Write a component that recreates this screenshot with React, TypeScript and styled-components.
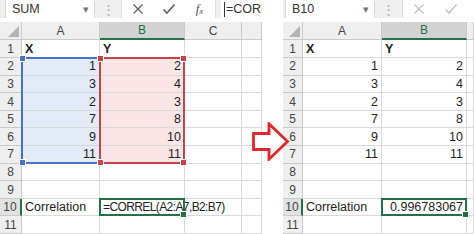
import React from "react";
import styled, { createGlobalStyle } from "styled-components";

const GlobalStyle = createGlobalStyle`
  html, body {
    margin: 0;
    padding: 0;
    background: #ffffff;
    overflow: hidden;
  }
  body {
    font-family: "Liberation Sans", Arial, sans-serif;
  }
`;

const GREEN = "#217346";
const BLUE = "#4472c4";
const RED = "#c8424a";

const ROW_H = 17.6;

const xs = [1, 3, 2, 7, 9, 11];
const ys = [2, 4, 3, 8, 10, 11];

function Sheet({
  width,
  name,
  toolbarPad,
  dotsWidth,
  fxWidth,
  columns,
  letters,
  disabled,
  result,
  editing,
}: {
  width: number;
  name: string;
  toolbarPad: number;
  dotsWidth: number;
  fxWidth: number;
  columns: string;
  letters: string[];
  disabled?: boolean;
  result: string;
  editing?: boolean;
}) {
  const rows: (string | number)[][] = [
    ["X", "Y"],
    ...xs.map((x, i) => [x, ys[i]]),
    ["", ""],
    ["", ""],
    ["Correlation", result],
    ["", ""],
  ];

  return (
    <Panel $w={width}>
      <Toolbar $pad={toolbarPad}>
        <NameBox>
          <span>{name}</span>
          <Caret>▾</Caret>
        </NameBox>
        <Dots $w={dotsWidth}>⋮</Dots>
        <FxBox $w={fxWidth}>
          <FxButton $disabled={disabled}>
            <svg width="12" height="12" viewBox="0 0 12 12">
              <path d="M1.5 1.5 L10.5 10.5 M10.5 1.5 L1.5 10.5" stroke="currentColor" strokeWidth="1.3" fill="none" />
            </svg>
          </FxButton>
          <FxButton $disabled={disabled}>
            <svg width="14" height="12" viewBox="0 0 14 12">
              <path d="M1.5 6.5 L5 10 L12.5 1.5" stroke="currentColor" strokeWidth="1.6" fill="none" />
            </svg>
          </FxButton>
          {!disabled && (
            <FxButton>
              <FxText>
                f<sub>x</sub>
              </FxText>
            </FxButton>
          )}
        </FxBox>
        {editing && (
          <FormulaInput>
            <Cursor />
            =CORREL(A2:A7,B2:B7)
          </FormulaInput>
        )}
      </Toolbar>

      <Grid $cols={columns}>
        <Corner $r={1} $c={1}>
          <svg width="11" height="11" viewBox="0 0 11 11">
            <polygon points="11,0 11,11 0,11" fill="#b4b4b4" />
          </svg>
        </Corner>
        {letters.map((l, i) => (
          <ColHeader key={i} $r={1} $c={i + 2} $active={l === "B"}>
            {l}
          </ColHeader>
        ))}

        {rows.map((row, ri) => (
          <React.Fragment key={ri}>
            <RowHeader $r={ri + 2} $c={1} $active={ri === 9}>
              {ri + 1}
            </RowHeader>
            {letters.map((_, ci) => {
              const v = ci < 2 ? row[ci] : "";
              const numeric = typeof v === "number" || /^[0-9.]+$/.test(String(v));
              const inRange = editing && ri >= 1 && ri <= 6;
              return (
                <Cell
                  key={ci}
                  $r={ri + 2}
                  $c={ci + 2}
                  $right={numeric}
                  $bold={ri === 0}
                  $fill={inRange && ci === 0 ? "#e3ebf7" : inRange && ci === 1 ? "#fbe6e6" : undefined}
                  $tight={editing && ri === 9 && ci === 1}
                >
                  {v}
                </Cell>
              );
            })}
          </React.Fragment>
        ))}

        {editing && (
          <>
            <RangeBox $c={2} $r0={3} $r1={9} $color={BLUE} $noRight>
              <Handle $color={BLUE} $x="left" $y="top" />
              <Handle $color={BLUE} $x="left" $y="bottom" />
            </RangeBox>
            <RangeBox $c={3} $r0={3} $r1={9} $color={RED}>
              <Handle $color={RED} $x="left" $y="top" />
              <Handle $color={RED} $x="right" $y="top" />
              <Handle $color={RED} $x="left" $y="bottom" />
              <Handle $color={RED} $x="right" $y="bottom" />
            </RangeBox>
          </>
        )}
        <RangeBox $c={3} $r0={11} $r1={12} $color={GREEN}>
          <Handle $color={GREEN} $x="right" $y="bottom" />
        </RangeBox>
      </Grid>
    </Panel>
  );
}

export default function App() {
  return (
    <>
      <GlobalStyle />
      <Page>
        <Sheet
          width={262}
          name="SUM"
          toolbarPad={5}
          dotsWidth={26}
          fxWidth={95}
          columns="22px 78px 85px 57px 20px"
          letters={["A", "B", "C", ""]}
          result="=CORREL(A2:A7,B2:B7)"
          editing
        />
        <Sheet
          width={191}
          name="B10"
          toolbarPad={2}
          dotsWidth={27}
          fxWidth={100}
          columns="20px 79px 85px 7px"
          letters={["A", "B", ""]}
          result="0.996783067"
          disabled
        />
        <Arrow width="38" height="39" viewBox="0 0 38 39">
          <polygon
            points="1.5,11.5 17,11.5 17,1.8 35.5,19.5 17,37.2 17,27.5 1.5,27.5"
            fill="#ffffff"
            stroke="#e2262b"
            strokeWidth="2.8"
            strokeLinejoin="miter"
          />
        </Arrow>
      </Page>
    </>
  );
}

const Page = styled.div`
  position: relative;
  display: flex;
  gap: 21px;
  width: 474px;
  height: 234px;
  overflow: hidden;
`;

const Panel = styled.div<{ $w: number }>`
  display: flex;
  flex-direction: column;
  flex: 0 0 ${(p) => p.$w}px;
  width: ${(p) => p.$w}px;
  overflow: hidden;
`;

const Toolbar = styled.div<{ $pad: number }>`
  display: flex;
  align-items: center;
  height: 33px;
  padding-left: ${(p) => p.$pad}px;
  background: #f0f0f0;
  box-sizing: border-box;
  overflow: hidden;
`;

const NameBox = styled.div`
  display: flex;
  flex: 0 0 auto;
  align-items: center;
  justify-content: space-between;
  width: 90px;
  height: 22px;
  padding: 0 5px 0 6px;
  box-sizing: border-box;
  background: #ffffff;
  border: 1px solid #d8d8d8;
  font-size: 12.5px;
  color: #333333;
`;

const Caret = styled.span`
  font-size: 11px;
  color: #777777;
`;

const Dots = styled.div<{ $w: number }>`
  flex: 0 0 auto;
  width: ${(p) => p.$w}px;
  text-align: center;
  font-size: 13px;
  color: #b0b0b0;
`;

const FxBox = styled.div<{ $w: number }>`
  display: flex;
  align-items: center;
  flex: 0 0 auto;
  width: ${(p) => p.$w}px;
  height: 22px;
  background: #ffffff;
  border: 1px solid #e0e0e0;
  box-sizing: border-box;
`;

const FxButton = styled.div<{ $disabled?: boolean }>`
  display: flex;
  align-items: center;
  justify-content: center;
  width: 32px;
  height: 100%;
  color: ${(p) => (p.$disabled ? "#c4c4c4" : "#5e5e5e")};
`;

const FxText = styled.span`
  font-family: "Liberation Serif", "Times New Roman", serif;
  font-style: italic;
  font-size: 13px;
  color: #555555;

  sub {
    font-size: 9px;
    vertical-align: -1px;
  }
`;

const FormulaInput = styled.div`
  display: flex;
  align-items: center;
  flex: 1 1 auto;
  min-width: 0;
  overflow: hidden;
  margin-left: 5px;
  height: 22px;
  padding-left: 3px;
  background: #ffffff;
  font-size: 12.5px;
  color: #333333;
  white-space: nowrap;
`;

const Cursor = styled.span`
  display: inline-block;
  flex: 0 0 auto;
  width: 1px;
  height: 15px;
  margin-right: 1px;
  background: #333333;
`;

const Grid = styled.div<{ $cols: string }>`
  display: grid;
  grid-template-columns: ${(p) => p.$cols};
  grid-template-rows: 18px repeat(11, ${ROW_H}px);
  margin-top: 4px;
  background: #ffffff;
`;

type Pos = { $r: number; $c: number };

const Corner = styled.div<Pos>`
  grid-row: ${(p) => p.$r};
  grid-column: ${(p) => p.$c};
  display: flex;
  align-items: flex-end;
  justify-content: flex-end;
  padding: 0 2px 2px 0;
  background: #efefef;
  border-right: 1px solid #cacaca;
  border-bottom: 1px solid #cacaca;
  box-sizing: border-box;
`;

const ColHeader = styled.div<Pos & { $active?: boolean }>`
  grid-row: ${(p) => p.$r};
  grid-column: ${(p) => p.$c};
  display: flex;
  align-items: center;
  justify-content: center;
  background: ${(p) => (p.$active ? "#d3d3d3" : "#efefef")};
  color: ${(p) => (p.$active ? GREEN : "#444444")};
  border-right: 1px solid #cacaca;
  border-bottom: ${(p) => (p.$active ? `2px solid ${GREEN}` : "1px solid #cacaca")};
  box-sizing: border-box;
  font-size: 12px;
`;

const RowHeader = styled.div<Pos & { $active?: boolean }>`
  grid-row: ${(p) => p.$r};
  grid-column: ${(p) => p.$c};
  display: flex;
  align-items: center;
  justify-content: center;
  background: ${(p) => (p.$active ? "#e2e2e2" : "#efefef")};
  color: #444444;
  border-right: ${(p) => (p.$active ? `2px solid ${GREEN}` : "1px solid #cacaca")};
  border-bottom: 1px solid #cacaca;
  box-sizing: border-box;
  font-size: 12px;
`;

const Cell = styled.div<
  Pos & { $right?: boolean; $bold?: boolean; $fill?: string; $tight?: boolean }
>`
  grid-row: ${(p) => p.$r};
  grid-column: ${(p) => p.$c};
  display: flex;
  align-items: center;
  justify-content: ${(p) => (p.$right ? "flex-end" : "flex-start")};
  padding: 0 3px;
  background: ${(p) => p.$fill ?? "transparent"};
  border-right: 1px solid #dadada;
  border-bottom: 1px solid #dadada;
  box-sizing: border-box;
  font-size: ${(p) => (p.$tight ? "12px" : "12.5px")};
  font-weight: ${(p) => (p.$bold ? 700 : 400)};
  letter-spacing: ${(p) => (p.$tight ? "-0.6px" : "0")};
  color: #222222;
  white-space: nowrap;
  overflow: visible;
  min-width: 0;
`;

const RangeBox = styled.div<{
  $c: number;
  $r0: number;
  $r1: number;
  $color: string;
  $noRight?: boolean;
}>`
  position: relative;
  grid-column: ${(p) => p.$c};
  grid-row: ${(p) => p.$r0} / ${(p) => p.$r1};
  margin: -1px 0 0 -1px;
  border: 2px solid ${(p) => p.$color};
  border-right-color: ${(p) => (p.$noRight ? "transparent" : p.$color)};
  box-sizing: border-box;
  pointer-events: none;
`;

const Handle = styled.span<{ $color: string; $x: "left" | "right"; $y: "top" | "bottom" }>`
  position: absolute;
  ${(p) => p.$x}: -4px;
  ${(p) => p.$y}: -4px;
  width: 5px;
  height: 5px;
  background: ${(p) => p.$color};
  border: 1px solid #ffffff;
`;

const Arrow = styled.svg`
  position: absolute;
  left: 252px;
  top: 122px;
`;
